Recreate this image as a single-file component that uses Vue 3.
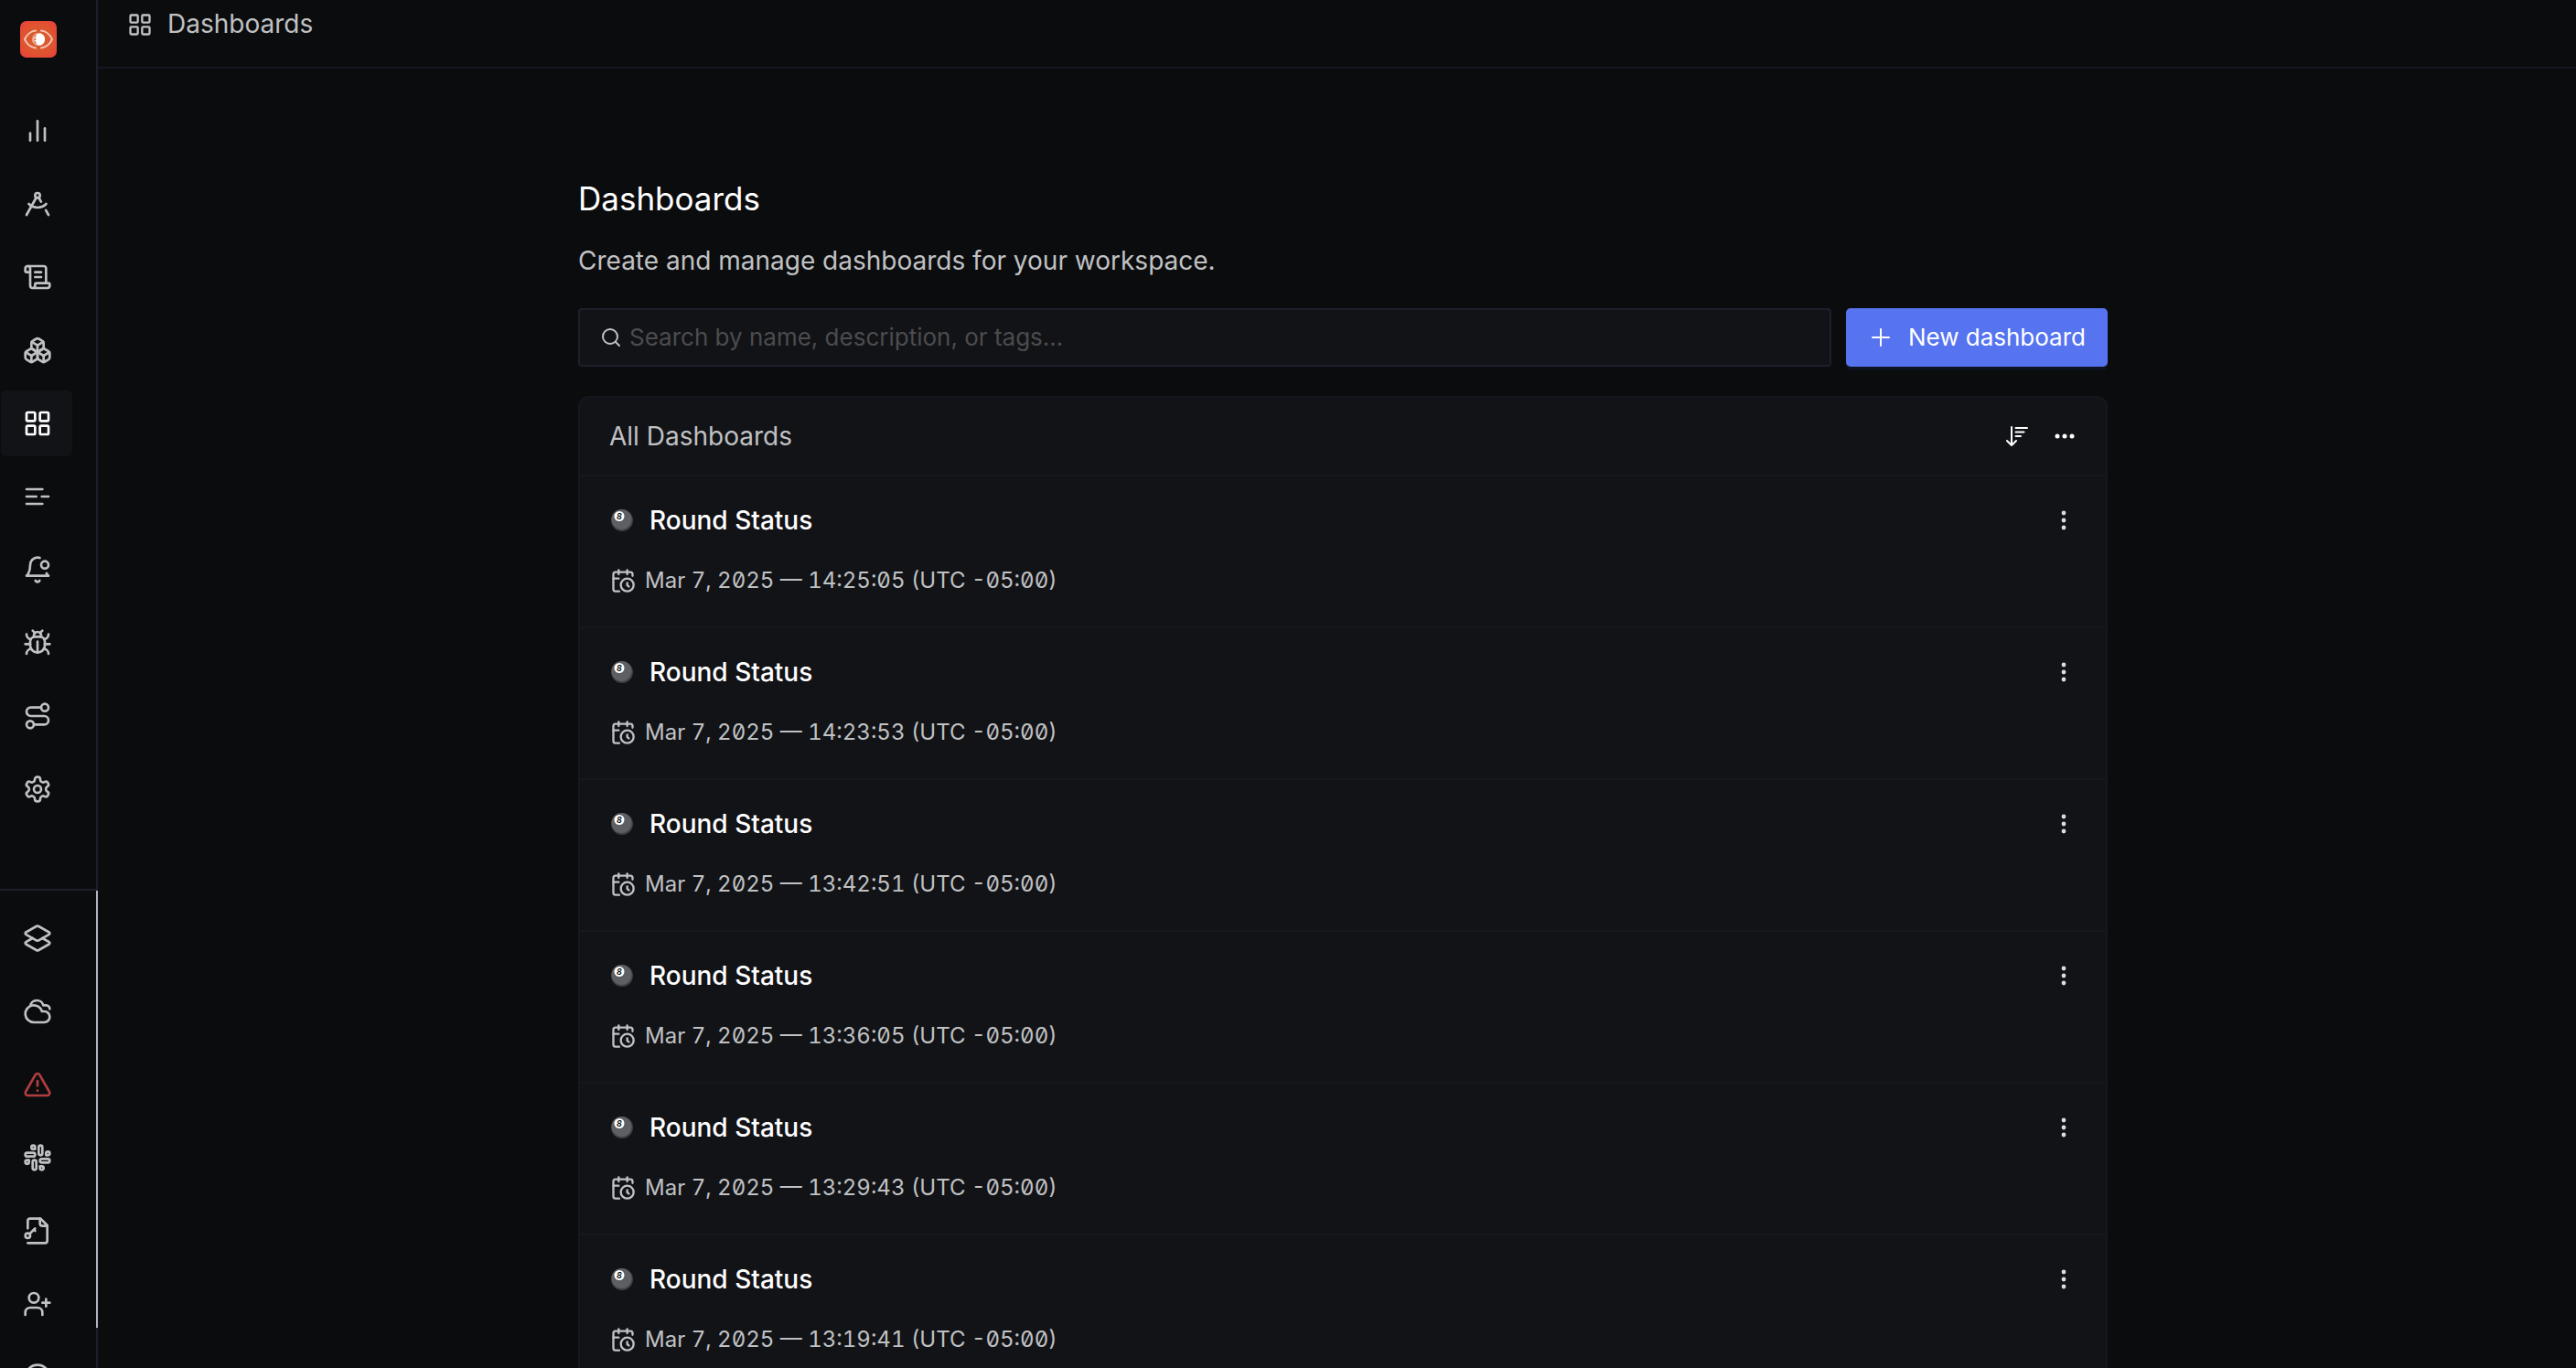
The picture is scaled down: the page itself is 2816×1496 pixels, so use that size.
<script setup>
import { ref } from 'vue'

const search = ref('')

const icons = {
  bars: '<path d="M18 20V10"/><path d="M12 20V4"/><path d="M6 20v-6"/>',
  compass:
    '<circle cx="12" cy="5" r="2"/><path d="m12.99 6.74 1.93 3.44"/><path d="M19.136 12a10 10 0 0 1-14.271 0"/><path d="m21 21-2.16-3.84"/><path d="m3 21 8.02-14.26"/>',
  scroll:
    '<path d="M15 12h-5"/><path d="M15 8h-5"/><path d="M19 17V5a2 2 0 0 0-2-2H4"/><path d="M8 21h12a2 2 0 0 0 2-2v-1a1 1 0 0 0-1-1H11a1 1 0 0 0-1 1v1a2 2 0 1 1-4 0V5a2 2 0 1 0-4 0v2a1 1 0 0 0 1 1h3"/>',
  boxes:
    '<path d="M2.97 12.92A2 2 0 0 0 2 14.63v3.24a2 2 0 0 0 .97 1.71l3 1.8a2 2 0 0 0 2.06 0L12 19v-5.5l-5-3-4.03 2.42Z"/><path d="m7 16.5-4.74-2.85"/><path d="m7 16.5 5-3"/><path d="M7 16.5v5.17"/><path d="M12 13.5V19l3.97 2.38a2 2 0 0 0 2.06 0l3-1.8a2 2 0 0 0 .97-1.71v-3.24a2 2 0 0 0-.97-1.71L17 10.5l-5 3Z"/><path d="m17 16.5-5-3"/><path d="m17 16.5 4.74-2.85"/><path d="M17 16.5v5.17"/><path d="M7.97 4.42A2 2 0 0 0 7 6.13v4.37l5 3 5-3V6.13a2 2 0 0 0-.97-1.71l-3-1.8a2 2 0 0 0-2.06 0l-3 1.8Z"/><path d="M12 8 7.26 5.15"/><path d="m12 8 4.74-2.85"/><path d="M12 13.5V8"/>',
  grid:
    '<rect x="3" y="3" width="7" height="7" rx="1"/><rect x="14" y="3" width="7" height="7" rx="1"/><rect x="14" y="14" width="7" height="7" rx="1"/><rect x="3" y="14" width="7" height="7" rx="1"/>',
  lines: '<path d="M3 6h13"/><path d="M3 12h8"/><path d="M15.5 12H21"/><path d="M3 18h13"/>',
  bell:
    '<path d="M19.4 14.9C20.2 16.4 21 17 21 17H3s3-2 3-9c0-3.3 2.7-6 6-6 .7 0 1.3.1 1.9.3"/><path d="M10.3 21a1.94 1.94 0 0 0 3.4 0"/><circle cx="18" cy="8" r="3"/>',
  bug:
    '<path d="m8 2 1.88 1.88"/><path d="M14.12 3.88 16 2"/><path d="M9 7.13v-1a3.003 3.003 0 1 1 6 0v1"/><path d="M12 20c-3.3 0-6-2.7-6-6v-3a4 4 0 0 1 4-4h4a4 4 0 0 1 4 4v3c0 3.3-2.7 6-6 6"/><path d="M12 20v-9"/><path d="M6.53 9C4.6 8.8 3 7.1 3 5"/><path d="M6 13H2"/><path d="M3 21c0-2.1 1.7-3.9 3.8-4"/><path d="M20.97 5c0 2.1-1.6 3.8-3.5 4"/><path d="M22 13h-4"/><path d="M17.2 17c2.1.1 3.8 1.9 3.8 4"/>',
  route:
    '<circle cx="6" cy="19" r="3"/><path d="M9 19h8.5a3.5 3.5 0 0 0 0-7h-11a3.5 3.5 0 0 1 0-7H15"/><circle cx="18" cy="5" r="3"/>',
  gear:
    '<path d="M12.22 2h-.44a2 2 0 0 0-2 2v.18a2 2 0 0 1-1 1.73l-.43.25a2 2 0 0 1-2 0l-.15-.08a2 2 0 0 0-2.73.73l-.22.38a2 2 0 0 0 .73 2.73l.15.1a2 2 0 0 1 1 1.72v.51a2 2 0 0 1-1 1.74l-.15.09a2 2 0 0 0-.73 2.73l.22.38a2 2 0 0 0 2.73.73l.15-.08a2 2 0 0 1 2 0l.43.25a2 2 0 0 1 1 1.73V20a2 2 0 0 0 2 2h.44a2 2 0 0 0 2-2v-.18a2 2 0 0 1 1-1.73l.43-.25a2 2 0 0 1 2 0l.15.08a2 2 0 0 0 2.73-.73l.22-.39a2 2 0 0 0-.73-2.73l-.15-.08a2 2 0 0 1-1-1.74v-.5a2 2 0 0 1 1-1.74l.15-.09a2 2 0 0 0 .73-2.73l-.22-.38a2 2 0 0 0-2.73-.73l-.15.08a2 2 0 0 1-2 0l-.43-.25a2 2 0 0 1-1-1.73V4a2 2 0 0 0-2-2z"/><circle cx="12" cy="12" r="3"/>',
  layers:
    '<path d="m16.02 12 5.48 3.13a1 1 0 0 1 0 1.74L13 21.74a2 2 0 0 1-2 0l-8.5-4.87a1 1 0 0 1 0-1.74L7.98 12"/><path d="M13 13.74a2 2 0 0 1-2 0L2.5 8.87a1 1 0 0 1 0-1.74L11 2.26a2 2 0 0 1 2 0l8.5 4.87a1 1 0 0 1 0 1.74Z"/>',
  cloud:
    '<path d="M17.5 21H9a7 7 0 1 1 6.71-9h1.79a4.5 4.5 0 1 1 0 9Z"/><path d="M22 10a3 3 0 0 0-3-3h-2.207a5.502 5.502 0 0 0-10.702.5"/>',
  alert:
    '<path d="m21.73 18-8-14a2 2 0 0 0-3.48 0l-8 14A2 2 0 0 0 4 21h16a2 2 0 0 0 1.73-3Z"/><path d="M12 9v4"/><path d="M12 17h.01"/>',
  slack:
    '<rect x="13" y="2" width="3" height="8" rx="1.5"/><path d="M19 8.5V10h1.5A1.5 1.5 0 1 0 19 8.5"/><rect x="8" y="14" width="3" height="8" rx="1.5"/><path d="M5 15.5V14H3.5A1.5 1.5 0 1 0 5 15.5"/><rect x="14" y="13" width="8" height="3" rx="1.5"/><path d="M15.5 19H14v1.5a1.5 1.5 0 1 0 1.5-1.5"/><rect x="2" y="8" width="8" height="3" rx="1.5"/><path d="M8.5 5H10V3.5A1.5 1.5 0 1 0 8.5 5"/>',
  fileKey:
    '<path d="M4 10V4a2 2 0 0 1 2-2h8.5L20 7.5V20a2 2 0 0 1-2 2H4"/><path d="M14 2v4a2 2 0 0 0 2 2h4"/><circle cx="4" cy="16" r="2"/><path d="m10 10-4.5 4.5"/><path d="m9 11 1 1"/>',
  userPlus:
    '<path d="M16 21v-2a4 4 0 0 0-4-4H6a4 4 0 0 0-4 4v2"/><circle cx="9" cy="7" r="4"/><path d="M19 8v6"/><path d="M22 11h-6"/>',
  help:
    '<circle cx="12" cy="12" r="10"/><path d="M9.09 9a3 3 0 0 1 5.83 1c0 2-3 3-3 3"/><path d="M12 17h.01"/>',
  calendar:
    '<path d="M21 7.5V6a2 2 0 0 0-2-2H5a2 2 0 0 0-2 2v14a2 2 0 0 0 2 2h3.5"/><path d="M16 2v4"/><path d="M8 2v4"/><path d="M3 10h5"/><path d="M17.5 17.5 16 16.3V14"/><circle cx="16" cy="16" r="6"/>',
}

const primaryNav = [
  { icon: 'bars', label: 'Services' },
  { icon: 'compass', label: 'Traces' },
  { icon: 'scroll', label: 'Logs' },
  { icon: 'boxes', label: 'Infrastructure' },
  { icon: 'grid', label: 'Dashboards', active: true },
  { icon: 'lines', label: 'Messaging queues' },
  { icon: 'bell', label: 'Alerts' },
  { icon: 'bug', label: 'Exceptions' },
  { icon: 'route', label: 'Service map' },
  { icon: 'gear', label: 'Settings' },
]

const secondaryNav = [
  { icon: 'layers', label: 'Workspaces' },
  { icon: 'cloud', label: 'Cloud' },
  { icon: 'alert', label: 'Warnings', danger: true },
  { icon: 'slack', label: 'Slack' },
  { icon: 'fileKey', label: 'License' },
  { icon: 'userPlus', label: 'Invite' },
  { icon: 'help', label: 'Help' },
]

const dashboards = [
  '14:25:05',
  '14:23:53',
  '13:42:51',
  '13:36:05',
  '13:29:43',
  '13:19:41',
].map((time, id) => ({ id, name: 'Round Status', date: 'Mar 7, 2025', time, zone: '(UTC -05:00)' }))
</script>

<template>
  <div class="app">
    <aside class="sidebar">
      <a class="brand" href="#" aria-label="Home">
        <svg viewBox="0 0 40 40" width="40" height="40">
          <defs>
            <radialGradient id="brand-bg" cx="50%" cy="50%" r="70%">
              <stop offset="0" stop-color="#d2622f" />
              <stop offset="0.6" stop-color="#e0532f" />
              <stop offset="1" stop-color="#ea3d40" />
            </radialGradient>
          </defs>
          <rect width="40" height="40" rx="7" fill="url(#brand-bg)" />
          <path d="M17 10.500C11.500 11 7 15.500 5 20c2 4.500 6.500 9 12 9.500" fill="none" stroke="#f6c4b3" stroke-width="2" stroke-linecap="round" />
          <path d="M23 10.500C28.500 11 33 15.500 35 20c-2 4.500-6.500 9-12 9.500" fill="none" stroke="#f6c4b3" stroke-width="2" stroke-linecap="round" />
          <circle cx="20" cy="20" r="7" fill="#eeb09a" />
          <ellipse cx="21.500" cy="20" rx="5.500" ry="6.500" fill="#fff" />
          <path d="M16.500 15.500v2M16.500 19v2M16.500 22.500v2" stroke="#e0633d" stroke-width="1.500" />
        </svg>
      </a>
      <nav class="nav primary" aria-label="Main">
        <a
          v-for="item in primaryNav"
          :key="item.icon"
          href="#"
          class="nav-item"
          :class="{ active: item.active }"
          :aria-label="item.label"
        >
          <svg class="icon" viewBox="0 0 24 24" v-html="icons[item.icon]" />
        </a>
      </nav>
      <nav class="nav secondary" aria-label="Secondary">
        <a
          v-for="item in secondaryNav"
          :key="item.icon"
          href="#"
          class="nav-item"
          :class="{ danger: item.danger }"
          :aria-label="item.label"
        >
          <svg class="icon" viewBox="0 0 24 24" v-html="icons[item.icon]" />
        </a>
        <span class="scroll-thumb"></span>
      </nav>
    </aside>

    <div class="page">
      <header class="topbar">
        <svg class="icon small" viewBox="0 0 24 24" v-html="icons.grid" />
        <span>Dashboards</span>
      </header>

      <main class="content">
        <h1>Dashboards</h1>
        <p class="subtitle">Create and manage dashboards for your workspace.</p>

        <div class="tools">
          <label class="search">
            <svg class="search-icon" viewBox="0 0 24 24" width="24" height="24">
              <circle cx="11" cy="11" r="8" />
              <path d="m17 17 4 4" />
            </svg>
            <input v-model="search" type="text" aria-label="Search dashboards" placeholder="Search by name, description, or tags..." />
          </label>
          <button class="new" type="button">
            <svg viewBox="0 0 20 20" width="20" height="20"><path d="M10 1v18M1 10h18" /></svg>
            New dashboard
          </button>
        </div>

        <section class="card">
          <header class="card-head">
            <h2>All Dashboards</h2>
            <div class="actions">
              <button type="button" aria-label="Sort">
                <svg class="sort" viewBox="0 0 24 24" width="24" height="24">
                  <path d="M6 2v20M1 17l5 5 5-5" />
                  <path d="M10.500 3H23M10.500 7.500h9M10.500 12h5.500" />
                </svg>
              </button>
              <button type="button" aria-label="More actions">
                <svg viewBox="0 0 24 24" width="24" height="24" fill="currentColor">
                  <circle cx="4" cy="12" r="2.500" /><circle cx="12" cy="12" r="2.500" /><circle cx="20" cy="12" r="2.500" />
                </svg>
              </button>
            </div>
          </header>

          <ul class="list">
            <li v-for="item in dashboards" :key="item.id" class="row">
              <div class="row-title">
                <svg viewBox="0 0 24 24" width="24" height="24">
                  <circle cx="12" cy="12" r="12" fill="#403f40" />
                  <circle cx="11.500" cy="11" r="11" fill="#5d6063" />
                  <circle cx="9" cy="7.500" r="5.500" fill="#fff" />
                  <text x="9" y="11" text-anchor="middle" class="ball-number">8</text>
                </svg>
                <a href="#">{{ item.name }}</a>
                <button type="button" :aria-label="`Options for ${item.name}`">
                  <svg viewBox="0 0 24 24" width="24" height="24" fill="currentColor">
                    <circle cx="12" cy="4" r="2.400" /><circle cx="12" cy="12" r="2.400" /><circle cx="12" cy="20" r="2.400" />
                  </svg>
                </button>
              </div>
              <div class="row-meta">
                <svg class="icon small" viewBox="0 0 24 24" v-html="icons.calendar" />
                <time>{{ item.date }} — {{ item.time }} {{ item.zone }}</time>
              </div>
            </li>
          </ul>
        </section>
      </main>
    </div>
  </div>
</template>

<style>
body {
  background: #0b0c0e;
}
</style>

<style scoped>
.app {
  display: flex;
  height: 100vh;
  overflow: hidden;
  background: #0b0c0e;
  color: #c0c1c3;
  font-family: Inter, "Liberation Sans", sans-serif;
  font-size: 28px;
  line-height: 40px;
}
.app * {
  box-sizing: border-box;
}
h1,
h2,
p,
ul {
  margin: 0;
  padding: 0;
  font-weight: 400;
}
a {
  color: inherit;
  text-decoration: none;
}
button {
  display: flex;
  align-items: center;
  padding: 0;
  border: 0;
  background: none;
  color: inherit;
  font: inherit;
  cursor: pointer;
}
svg {
  display: block;
  flex: none;
}
.icon {
  width: 32px;
  height: 32px;
  fill: none;
  stroke: currentColor;
  stroke-width: 2;
  stroke-linecap: round;
  stroke-linejoin: round;
}
.icon.small {
  width: 28px;
  height: 28px;
}

.sidebar {
  display: flex;
  flex-direction: column;
  flex: none;
  width: 107px;
  border-right: 2px solid #1e1f2b;
}
.brand {
  padding: 23px 22px 44px;
}
.nav {
  display: flex;
  flex-direction: column;
  gap: 8px;
}
.nav-item {
  display: flex;
  flex: none;
  align-items: center;
  justify-content: center;
  width: 78px;
  height: 72px;
  margin-left: 1px;
  padding-left: 2px;
  border-radius: 6px;
}
.active {
  background: #121317;
  color: #fff;
}
.danger {
  color: #b03e40;
}
.secondary {
  position: relative;
  flex: 1;
  min-height: 0;
  margin-top: 73px;
  padding-top: 16px;
  border-top: 2px solid #1e1f2b;
}
.scroll-thumb {
  position: absolute;
  top: 0;
  right: -2px;
  width: 2px;
  height: 91.5%;
  background: #b4b5c2;
}

.page {
  flex: 1;
  min-width: 0;
}
.topbar {
  display: flex;
  align-items: flex-start;
  gap: 16px;
  height: 75px;
  padding: 6px 32px;
  border-bottom: 2px solid #16171f;
}
.topbar .icon {
  margin-top: 7px;
}
.content {
  width: 1685px;
  max-width: 100%;
  margin: 0 auto;
  padding: 118px 0 0 13px;
}
h1 {
  color: #fff;
  font-size: 35px;
  line-height: 48px;
}
.subtitle {
  margin-top: 24px;
}
.tools {
  display: flex;
  gap: 16px;
  margin: 32px 0;
  font-size: 26px;
}
.search {
  display: flex;
  flex: 1;
  align-items: center;
  gap: 8px;
  height: 64px;
  padding: 0 22px;
  border: 2px solid #1e1f2b;
  border-radius: 4px;
  background: #121317;
}
.search-icon,
.new svg,
.sort {
  fill: none;
  stroke: currentColor;
  stroke-width: 2;
  stroke-linecap: round;
  stroke-linejoin: round;
}
.search input {
  flex: 1;
  min-width: 0;
  padding: 0;
  border: 0;
  outline: 0;
  background: none;
  color: #fff;
  font: inherit;
}
.search input::placeholder {
  color: #4b4c4e;
  opacity: 1;
}
.new {
  flex: none;
  gap: 20px;
  padding: 0 24px 0 28px;
  border-radius: 5px;
  background: #5673f0;
  box-shadow: 0 4px 0 #0e1320;
  color: #fff;
}
.card {
  border: 2px solid #16171f;
  border-radius: 12px;
  background: #121317;
}
.card-head {
  display: flex;
  align-items: center;
  justify-content: space-between;
  height: 84px;
  padding: 0 33px 0 32px;
}
h2 {
  font-size: 28px;
}
.actions {
  display: flex;
  gap: 28px;
  color: #fff;
}
.list {
  list-style: none;
}
.row {
  height: 166px;
  padding: 28px 34px 0;
  border-top: 2px solid #16171f;
}
.row-title,
.row-meta {
  display: flex;
  align-items: center;
}
.row-title {
  gap: 18px;
  color: #fff;
  font-weight: 500;
}
.row-title button {
  margin-left: auto;
  color: #dcdcdc;
}
.ball-number {
  font-size: 9px;
  font-style: italic;
  font-weight: 600;
}
.row-meta {
  gap: 10px;
  margin-top: 26px;
  font-size: 24px;
}
time {
  font-variant-numeric: lining-nums tabular-nums slashed-zero;
}
.row-meta .icon {
  margin-left: -1px;
}
</style>
